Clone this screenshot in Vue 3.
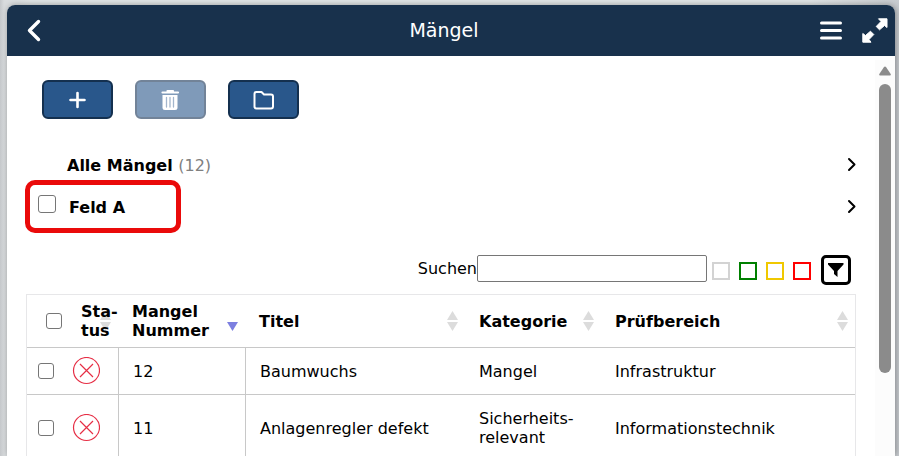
<script setup>
import { ref } from 'vue'

const search = ref('')
const folders = [
  { name: 'Alle Mängel', count: 12, selectable: false },
  { name: 'Feld A', count: null, selectable: true },
]
const levels = ['grey', 'green', 'yellow', 'red']
const rows = [
  { nr: 12, title: 'Baumwuchs', category: ['Mangel'], area: 'Infrastruktur' },
  { nr: 11, title: 'Anlagenregler defekt', category: ['Sicherheits-', 'relevant'], area: 'Informationstechnik' },
]
</script>

<template>
  <div class="page">
    <main class="window">
      <header class="titlebar">
        <button class="icon-btn" aria-label="Zurück">
          <svg width="16" height="24" viewBox="0 0 16 24"><path d="M12.500 2.500L3.500 11.500L12.500 20.500" fill="none" stroke="#fff" stroke-width="3.400" stroke-linecap="round" stroke-linejoin="round" /></svg>
        </button>
        <h1>Mängel</h1>
        <div class="title-actions">
          <button class="icon-btn" aria-label="Menü">
            <svg width="22" height="20" viewBox="0 0 22 20"><path d="M1.500 2H20.500M1.500 9.500H20.500M1.500 17H20.500" stroke="#fff" stroke-width="3" stroke-linecap="round" /></svg>
          </button>
          <button class="icon-btn" aria-label="Vollbild">
            <svg width="26" height="26" viewBox="0 0 26 26" fill="#fff" stroke="#fff" stroke-linejoin="round"><path d="M16.500 0.800H25V9.500L22.500 7.500L17.500 11.800L14.200 8.500L19 3.500Z" /><path d="M0.800 15.500L3.500 17.500L8.500 13.200L11.800 16.500L7 21.500L9 24.200H0.800Z" /></svg>
          </button>
        </div>
      </header>

      <div class="body">
        <div class="content">
          <div class="toolbar">
            <button class="tool" aria-label="Neu">
              <svg width="18" height="18" viewBox="0 0 18 18"><path d="M8.500 2V16M1.500 9H15.500" stroke="#fff" stroke-width="2.600" stroke-linecap="round" /></svg>
            </button>
            <button class="tool" disabled aria-label="Löschen">
              <svg width="20" height="22" viewBox="0 0 20 22"><path d="M1.500 3.500H17M6.500 2H12" stroke="#fff" stroke-width="2.200" stroke-linecap="round" /><path d="M1.500 6H16.500V18.500Q16.500 21 14 21H4Q1.500 21 1.500 18.500Z" fill="#fff" /><path d="M5.500 8.500V18M9 8.500V18M12.500 8.500V18" stroke="#a3b6cd" stroke-width="1.300" stroke-linecap="round" /></svg>
            </button>
            <button class="tool" aria-label="Ordner">
              <svg width="22" height="20" viewBox="0 0 22 20"><path d="M3.500 2H8.500L11 4.500H18Q20 4.500 20 6.500V16.500Q20 18.500 18 18.500H3.500Q1.500 18.500 1.500 16.500V4Q1.500 2 3.500 2Z" fill="none" stroke="#fff" stroke-width="2" stroke-linejoin="round" /></svg>
            </button>
          </div>

          <ul class="folders">
            <li v-for="f in folders" :key="f.name" :class="{ marked: f.selectable }">
              <input v-if="f.selectable" id="folder-a" type="checkbox" class="check large">
              <label v-if="f.selectable" for="folder-a">{{ f.name }}</label>
              <span v-else class="all"><b>{{ f.name }}</b> <span class="count">({{ f.count }})</span></span>
              <button class="open" :aria-label="f.name + ' öffnen'">
                <svg width="10" height="16" viewBox="0 0 10 16"><path d="M3 2L8.500 7.500L3 13" fill="none" stroke="#000" stroke-width="2" stroke-linecap="round" stroke-linejoin="round" /></svg>
              </button>
            </li>
          </ul>

          <div class="search">
            <label for="search">Suchen</label>
            <input id="search" v-model="search" type="text" class="field">
            <div class="levels">
              <button v-for="l in levels" :key="l" class="level" :class="l" :aria-label="l"></button>
            </div>
            <button class="filter" aria-label="Filter">
              <svg width="18" height="16" viewBox="0 0 18 16"><path d="M1 1H16.500V2.500L10.500 9V15L7 12V9L1 2.500Z" /></svg>
            </button>
          </div>

          <table>
            <colgroup>
              <col class="c-check"><col class="c-status"><col class="c-nr"><col class="c-title"><col class="c-cat"><col>
            </colgroup>
            <thead>
              <tr>
                <th class="check-head"><input type="checkbox" class="check" aria-label="Alle auswählen"></th>
                <th class="status-head"><span class="label">Sta-<br>tus</span><i class="sort"></i></th>
                <th><span class="label">Mangel<br>Nummer</span><i class="sort desc"></i></th>
                <th>Titel<i class="sort"></i></th>
                <th>Kategorie<i class="sort"></i></th>
                <th>Prüfbereich<i class="sort"></i></th>
              </tr>
            </thead>
            <tbody>
              <tr v-for="r in rows" :key="r.nr">
                <td class="check-cell"><input type="checkbox" class="check" :aria-label="'Mangel ' + r.nr"></td>
                <td class="status-cell">
                  <svg width="28" height="28" viewBox="0 0 28 28" fill="none" stroke="#e62e45" stroke-width="1.200"><circle cx="14.500" cy="13.500" r="13" /><path d="M8 7L21 20M21 7L8 20" /></svg>
                </td>
                <td class="ruled">{{ r.nr }}</td>
                <td class="ruled">{{ r.title }}</td>
                <td><template v-for="(part, i) in r.category" :key="part"><br v-if="i">{{ part }}</template></td>
                <td>{{ r.area }}</td>
              </tr>
            </tbody>
          </table>
        </div>

        <div class="scrollbar" aria-hidden="true">
          <svg width="12" height="10" viewBox="0 0 12 10"><path d="M6 0.500Q6.600 0.500 7 1L11.700 8Q12.200 9.500 11 9.500H1Q-0.200 9.500 0.300 8L5 1Q5.400 0.500 6 0.500Z" fill="#8b8b8b" /></svg>
          <div class="thumb"></div>
        </div>
      </div>
    </main>
  </div>
</template>

<style>
body {
  background: #d5d8da;
}
</style>

<style scoped>
* {
  box-sizing: border-box;
}
.page {
  height: 100vh;
  padding: 5px 4px 0 7px;
  overflow: hidden;
  background: linear-gradient(90deg, #c4c7ca 0, #d8dbdd 4px, #e2e6e7 30px, #e2e6e7 90%, #c8ccd0);
  color: #000;
  font: 16px/19px Verdana, "DejaVu Sans", sans-serif;
}
.window {
  display: flex;
  flex-direction: column;
  height: 100%;
  overflow: hidden;
  border-radius: 8px 8px 0 0;
  background: #fff;
  box-shadow: 1px 0 6px rgba(0, 0, 0, 0.35);
}
.titlebar {
  display: grid;
  grid-template-columns: 1fr auto 1fr;
  flex: none;
  align-items: center;
  height: 51px;
  padding: 0 7px 0 19px;
  background: #18314c;
  color: #fff;
}
h1 {
  margin: 0;
  padding-right: 26px;
  font-size: 19px;
  font-weight: 400;
}
button {
  padding: 0;
  border: 0;
  background: none;
  font: inherit;
}
svg {
  display: block;
}
.icon-btn {
  justify-self: start;
}
.title-actions {
  display: flex;
  align-items: center;
  justify-self: end;
  gap: 20px;
}
.body {
  display: flex;
  flex: 1;
  min-height: 0;
}
.content {
  flex: 1;
  min-width: 0;
  padding: 24px 19px 0;
}
.toolbar {
  display: flex;
  gap: 22px;
  padding-left: 16px;
}
.tool {
  display: grid;
  place-items: center;
  width: 71px;
  height: 39px;
  border: 2px solid #14304f;
  border-radius: 6px;
  background: #29578b;
}
.tool:disabled {
  border-color: #728398;
  background: #7f9ab9;
}
.folders {
  margin: 25px 0 0;
  padding: 0;
  list-style: none;
}
.folders li {
  position: relative;
  display: flex;
  align-items: center;
  height: 42px;
  padding-left: 12px;
  font-weight: 700;
}
.folders label {
  padding-left: 13px;
}
.all {
  padding-left: 29px;
}
.count {
  color: #808080;
  font-weight: 400;
}
.open {
  margin-left: auto;
}
.marked::after {
  position: absolute;
  top: -6px;
  left: -1px;
  box-sizing: border-box;
  width: 156px;
  height: 53px;
  border: 5px solid #ea0a0a;
  border-radius: 10px;
  content: "";
  pointer-events: none;
}
.check {
  display: block;
  flex: none;
  width: 16px;
  height: 16px;
  margin: 0;
  border: 1px solid #767676;
  border-radius: 3px;
  appearance: none;
  background: #fff;
}
.check.large {
  width: 18px;
  height: 18px;
  margin-bottom: 6px;
}
.search {
  display: flex;
  align-items: flex-end;
  justify-content: flex-end;
  margin-top: 27px;
  padding-right: 5px;
}
.search label {
  padding-bottom: 7px;
}
.field {
  width: 230px;
  height: 27px;
  margin-bottom: 3px;
  padding: 1px 4px;
  border: 1px solid #767676;
  border-radius: 2px;
  font: inherit;
}
.levels {
  display: flex;
  gap: 9px;
  padding: 0 10px 5px 5px;
}
.level {
  width: 18px;
  height: 18px;
  border: 2px solid;
}
.grey { border-color: #d3d3d3; }
.green { border-color: #008000; }
.yellow { border-color: #f0c800; }
.red { border-color: #f00; }
.filter {
  display: grid;
  place-items: center;
  width: 30px;
  height: 30px;
  border: 3px solid #000;
  border-radius: 5px;
}
table {
  width: 100%;
  margin-top: 9px;
  border: 1px solid #e7e7e9;
  border-collapse: separate;
  border-spacing: 0;
  table-layout: fixed;
}
.c-check { width: 39px; }
.c-status { width: 52px; }
.c-nr { width: 127px; }
.c-title { width: 220px; }
.c-cat { width: 136px; }
th,
td {
  padding: 8px 14px;
  border-bottom: 1px solid #c8c8c8;
  text-align: left;
  vertical-align: middle;
}
th {
  position: relative;
  height: 53px;
  padding-block: 7px;
}
td {
  height: 47px;
}
tbody tr + tr td {
  height: 67px;
}
.ruled {
  border-left: 1px solid #c8c8c8;
}
th.check-head {
  padding: 0 0 0 19px;
}
th.status-head {
  padding-inline: 15px 0;
}
td.check-cell {
  padding: 0 0 0 11px;
}
td.status-cell {
  padding: 0 0 0 6px;
}
.label {
  position: relative;
  z-index: 1;
}
.sort {
  position: absolute;
  top: 16px;
  right: 7px;
  width: 11px;
  height: 20px;
}
.sort::before,
.sort::after {
  position: absolute;
  left: 0;
  width: 100%;
  height: 9px;
  background: #dcdcdc;
  content: "";
}
.sort::before {
  top: 0;
  clip-path: polygon(50% 0, 100% 100%, 0 100%);
}
.sort::after {
  bottom: 0;
  clip-path: polygon(0 0, 100% 0, 50% 100%);
}
.desc::before {
  display: none;
}
.sort.desc::after {
  background: #7c7fe0;
}
.scrollbar {
  display: flex;
  flex: none;
  flex-direction: column;
  align-items: center;
  gap: 8px;
  width: 20px;
  margin-top: 4px;
  padding-top: 6px;
  background: #fcfcfc;
}
.thumb {
  width: 12px;
  height: 74%;
  border-radius: 6px;
  background: #8b8b8b;
}
</style>
